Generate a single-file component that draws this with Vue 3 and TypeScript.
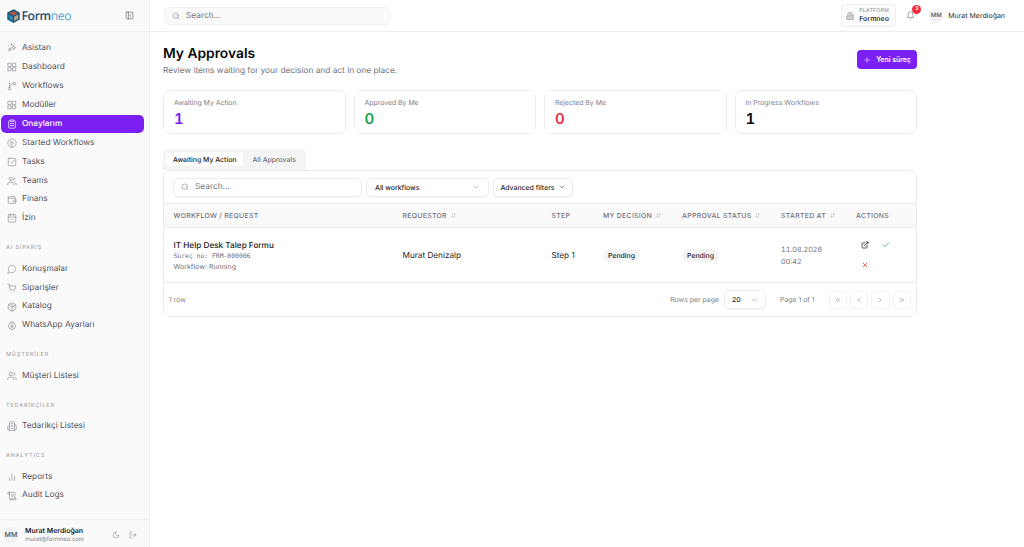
<script setup lang="ts">
type NavItem = { label: string; icon: string; active?: boolean }
type NavGroup = { title?: string; items: NavItem[] }

const groups: NavGroup[] = [
  {
    items: [
      { label: 'Asistan', icon: 'spark' },
      { label: 'Dashboard', icon: 'grid' },
      { label: 'Workflows', icon: 'branch' },
      { label: 'Modüller', icon: 'grid' },
      { label: 'Onaylarım', icon: 'clipboard', active: true },
      { label: 'Started Workflows', icon: 'play' },
      { label: 'Tasks', icon: 'check' },
      { label: 'Teams', icon: 'users' },
      { label: 'Finans', icon: 'wallet' },
      { label: 'İzin', icon: 'calendar' }
    ]
  },
  {
    title: 'AI SIPARIŞ',
    items: [
      { label: 'Konuşmalar', icon: 'chat' },
      { label: 'Siparişler', icon: 'cart' },
      { label: 'Katalog', icon: 'box' },
      { label: 'WhatsApp Ayarları', icon: 'gear' }
    ]
  },
  { title: 'MÜŞTERİLER', items: [{ label: 'Müşteri Listesi', icon: 'users' }] },
  { title: 'TEDARİKÇİLER', items: [{ label: 'Tedarikçi Listesi', icon: 'building' }] },
  {
    title: 'ANALYTICS',
    items: [
      { label: 'Reports', icon: 'bars' },
      { label: 'Audit Logs', icon: 'scroll' }
    ]
  }
]

const icons: Record<string, string[]> = {
  spark: ['M11 2v3', 'M9.500 3.500h3', 'M16 6l1.500 3.500L21 11l-3.500 1.500L16 16l-1.500-3.500L11 11l3.500-1.500z', 'M7 12l1 2.500 2.500 1-2.500 1L7 19l-1-2.500-2.500-1 2.500-1z', 'M3 22h.01', 'M4 6h.01'],
  grid: ['M3 3h7v8H3z', 'M14 3h7v8h-7z', 'M3 14h7v7H3z', 'M14 14h7v7h-7z'],
  branch: ['M6 3v12', 'M6 21a3 3 0 1 0 0-6 3 3 0 0 0 0 6z', 'M18 9a3 3 0 1 0 0-6 3 3 0 0 0 0 6z', 'M15 6a9 9 0 0 0-9 9'],
  clipboard: ['M8 4H6a2 2 0 0 0-2 2v14a2 2 0 0 0 2 2h12a2 2 0 0 0 2-2V6a2 2 0 0 0-2-2h-2', 'M9 2h6v4H9z', 'M8 11h8', 'M8 16h8'],
  play: ['M12 22a10 10 0 1 0 0-20 10 10 0 0 0 0 20z', 'M10 8l6 4-6 4z'],
  check: ['M5 3h14a2 2 0 0 1 2 2v14a2 2 0 0 1-2 2H5a2 2 0 0 1-2-2V5a2 2 0 0 1 2-2z', 'M8 12l3 3 6-7'],
  users: ['M16 21v-2a4 4 0 0 0-4-4H6a4 4 0 0 0-4 4v2', 'M9 11a4 4 0 1 0 0-8 4 4 0 0 0 0 8z', 'M22 21v-2a4 4 0 0 0-3-3.900', 'M16 3.100a4 4 0 0 1 0 7.800'],
  wallet: ['M19 7V5a1 1 0 0 0-1-1H5a2 2 0 0 0 0 4h15a1 1 0 0 1 1 1v10a1 1 0 0 1-1 1H5a2 2 0 0 1-2-2V6', 'M21 12h-4a2 2 0 0 0 0 4h4'],
  calendar: ['M8 2v4', 'M16 2v4', 'M5 4h14a2 2 0 0 1 2 2v14a2 2 0 0 1-2 2H5a2 2 0 0 1-2-2V6a2 2 0 0 1 2-2z', 'M3 10h18', 'M8 16h.01', 'M12 16h.01', 'M16 16h.01'],
  chat: ['M7.900 20A9 9 0 1 0 4 16.100L2 22z'],
  cart: ['M2 3h3l2.700 12.500a1 1 0 0 0 1 .8h9.600a1 1 0 0 0 1-.8L21 7H5.500', 'M9 21h.01', 'M18 21h.01'],
  box: ['M21 8a2 2 0 0 0-1-1.700l-7-4a2 2 0 0 0-2 0l-7 4A2 2 0 0 0 3 8v8a2 2 0 0 0 1 1.700l7 4a2 2 0 0 0 2 0l7-4a2 2 0 0 0 1-1.700z', 'M3.300 7L12 12l8.700-5', 'M12 22V12', 'M7.500 4.300l9 5.100'],
  gear: ['M12 15a3 3 0 1 0 0-6 3 3 0 0 0 0 6z', 'M12 2l2 3 3.500-.5L18 8l3 2-1 2 1 2-3 2-.5 3.500L14 19l-2 3-2-3-3.500.5L6 16l-3-2 1-2-1-2 3-2 .5-3.500L10 5z'],
  building: ['M6 22V4a2 2 0 0 1 2-2h8a2 2 0 0 1 2 2v18z', 'M6 12H4a2 2 0 0 0-2 2v6a2 2 0 0 0 2 2h2', 'M18 9h2a2 2 0 0 1 2 2v9a2 2 0 0 1-2 2h-2', 'M10 6h4', 'M10 10h4', 'M10 14h4', 'M10 18h4'],
  bars: ['M12 20V4', 'M18 20v-9', 'M6 20v-5'],
  scroll: ['M15 12h-5', 'M15 8h-5', 'M19 17V5a2 2 0 0 0-2-2H4', 'M8 21h12a2 2 0 0 0 2-2v-1a1 1 0 0 0-1-1H11a1 1 0 0 0-1 1v1a2 2 0 1 1-4 0V5a2 2 0 1 0-4 0v2a1 1 0 0 0 1 1h3']
}

const stats = [
  { label: 'Awaiting My Action', value: '1', tone: 'violet' },
  { label: 'Approved By Me', value: '0', tone: 'green' },
  { label: 'Rejected By Me', value: '0', tone: 'red' },
  { label: 'In Progress Workflows', value: '1', tone: 'ink' }
]

const columns = [
  { label: 'WORKFLOW / REQUEST', sort: false },
  { label: 'REQUESTOR', sort: true },
  { label: 'STEP', sort: false },
  { label: 'MY DECISION', sort: true },
  { label: 'APPROVAL STATUS', sort: true },
  { label: 'STARTED AT', sort: true },
  { label: 'ACTIONS', sort: false }
]

const pagers = [
  ['M11 17l-5-5 5-5', 'M18 17l-5-5 5-5'],
  ['M15 18l-6-6 6-6'],
  ['M9 18l6-6-6-6'],
  ['M6 17l5-5-5-5', 'M13 17l5-5-5-5']
]
</script>

<template>
  <div class="shell">
    <aside class="sidebar">
      <div class="brand">
        <div class="logo">
          <svg class="cube" viewBox="0 0 24 24">
            <path d="M12 1 22 6.500v11L12 23 2 17.500v-11z" fill="#155a80" />
            <path d="M12 4 19 7.500 12 11 5 7.500z" fill="#b9533b" />
            <path d="M4.500 9.500 11 13v7l-6.500-3.500z" fill="#2f86ad" />
            <path d="M19.500 9.500 13 13v7l6.500-3.500z" fill="#c7a27a" />
          </svg>
          <span class="word"><b>Form</b><i>neo</i></span>
        </div>
        <svg class="collapse" viewBox="0 0 24 24">
          <path d="M5 3h14a2 2 0 0 1 2 2v14a2 2 0 0 1-2 2H5a2 2 0 0 1-2-2V5a2 2 0 0 1 2-2z" />
          <path d="M9 3v18" />
          <path d="M16 15l-3-3 3-3" />
        </svg>
      </div>

      <nav class="nav">
        <section v-for="(group, gi) in groups" :key="gi" class="group">
          <h4 v-if="group.title">{{ group.title }}</h4>
          <a v-for="item in group.items" :key="item.label" class="item" :class="{ active: item.active }">
            <svg class="ico" viewBox="0 0 24 24">
              <path v-for="d in icons[item.icon]" :key="d" :d="d" />
            </svg>
            <span>{{ item.label }}</span>
          </a>
        </section>
      </nav>

      <div class="me">
        <span class="avatar">MM</span>
        <div class="me-text">
          <strong>Murat Merdioğan</strong>
          <small>murat@formneo.com</small>
        </div>
        <svg class="me-ico" viewBox="0 0 24 24"><path d="M12 3a6 6 0 0 0 9 9 9 9 0 1 1-9-9z" /></svg>
        <svg class="me-ico" viewBox="0 0 24 24">
          <path d="M9 21H5a2 2 0 0 1-2-2V5a2 2 0 0 1 2-2h4" />
          <path d="M16 17l5-5-5-5" />
          <path d="M21 12H9" />
        </svg>
      </div>
    </aside>

    <div class="main">
      <header class="topbar">
        <label class="top-search">
          <svg class="ico" viewBox="0 0 24 24"><circle cx="11" cy="11" r="8" /><path d="M21 21l-4.300-4.300" /></svg>
          <span>Search...</span>
        </label>
        <div class="top-right">
          <div class="platform">
            <svg class="ico" viewBox="0 0 24 24">
              <path v-for="d in icons.building" :key="d" :d="d" />
            </svg>
            <div>
              <small>PLATFORM</small>
              <strong>Formneo</strong>
            </div>
          </div>
          <div class="bell">
            <svg viewBox="0 0 24 24">
              <path d="M6 8a6 6 0 0 1 12 0c0 7 3 9 3 9H3s3-2 3-9" />
              <path d="M10.300 21a1.900 1.900 0 0 0 3.400 0" />
            </svg>
            <span class="badge">3</span>
          </div>
          <span class="avatar">MM</span>
          <span class="top-name">Murat Merdioğan</span>
        </div>
      </header>

      <main class="content">
        <div class="heading">
          <div>
            <h1>My Approvals</h1>
            <p>Review items waiting for your decision and act in one place.</p>
          </div>
          <button class="primary" type="button">
            <svg viewBox="0 0 24 24"><path d="M5 12h14" /><path d="M12 5v14" /></svg>
            Yeni süreç
          </button>
        </div>

        <div class="stats">
          <div v-for="s in stats" :key="s.label" class="stat">
            <span>{{ s.label }}</span>
            <strong :class="s.tone">{{ s.value }}</strong>
          </div>
        </div>

        <div class="tabs">
          <span class="tab on">Awaiting My Action</span>
          <span class="tab">All Approvals</span>
        </div>

        <div class="card">
          <div class="toolbar">
            <label class="field search">
              <svg class="ico" viewBox="0 0 24 24"><circle cx="11" cy="11" r="8" /><path d="M21 21l-4.300-4.300" /></svg>
              <span>Search...</span>
            </label>
            <div class="field select">
              <span>All workflows</span>
              <svg class="chev" viewBox="0 0 24 24"><path d="M6 9l6 6 6-6" /></svg>
            </div>
            <div class="field adv">
              <span>Advanced filters</span>
              <svg class="chev dark" viewBox="0 0 24 24"><path d="M6 9l6 6 6-6" /></svg>
            </div>
          </div>

          <div class="row head">
            <div v-for="c in columns" :key="c.label" class="th">
              {{ c.label }}
              <svg v-if="c.sort" class="sort" viewBox="0 0 24 24">
                <path d="M11 16l-3 3-3-3" /><path d="M8 19V5" /><path d="M13 8l3-3 3 3" /><path d="M16 5v14" />
              </svg>
            </div>
          </div>

          <div class="row body">
            <div class="request">
              <strong>IT Help Desk Talep Formu</strong>
              <code>Süreç no: FRM-000006</code>
              <small>Workflow: Running</small>
            </div>
            <div>Murat Denizalp</div>
            <div>Step 1</div>
            <div><span class="pill">Pending</span></div>
            <div><span class="pill">Pending</span></div>
            <div class="date">11.08.2026<br />00:42</div>
            <div class="actions">
              <svg class="act open" viewBox="0 0 24 24">
                <path d="M15 3h6v6" /><path d="M10 14 21 3" />
                <path d="M18 13v6a2 2 0 0 1-2 2H5a2 2 0 0 1-2-2V8a2 2 0 0 1 2-2h6" />
              </svg>
              <svg class="act ok" viewBox="0 0 24 24"><path d="M20 6 9 17l-5-5" /></svg>
              <svg class="act no" viewBox="0 0 24 24"><path d="M18 6 6 18" /><path d="M6 6l12 12" /></svg>
            </div>
          </div>

          <div class="foot">
            <span class="count">1 row</span>
            <div class="pager">
              <span class="muted">Rows per page</span>
              <div class="field rows">
                <span>20</span>
                <svg class="chev" viewBox="0 0 24 24"><path d="M6 9l6 6 6-6" /></svg>
              </div>
              <span class="muted page">Page 1 of 1</span>
              <div class="pages">
                <span v-for="(p, i) in pagers" :key="i" class="pg">
                  <svg viewBox="0 0 24 24"><path v-for="d in p" :key="d" :d="d" /></svg>
                </span>
              </div>
            </div>
          </div>
        </div>
      </main>
    </div>
  </div>
</template>

<style>
html,
body {
  margin: 0;
  background: #fff;
}
</style>

<style scoped>
.shell {
  display: flex;
  height: 547px;
  overflow: hidden;
  font-family: Inter, "Liberation Sans", sans-serif;
  color: #18181b;
  font-size: 8.3px;
  text-rendering: geometricPrecision;
}
svg {
  fill: none;
  stroke: currentColor;
  stroke-width: 1.6;
  stroke-linecap: round;
  stroke-linejoin: round;
  flex: none;
}
.ico {
  width: 10px;
  height: 10px;
}
.sidebar {
  width: 149px;
  flex: none;
  display: flex;
  flex-direction: column;
  background: #fafafa;
  border-right: 1px solid #f0f0f1;
}
.brand {
  height: 31px;
  flex: none;
  display: flex;
  align-items: center;
  justify-content: space-between;
  padding: 0 15px 0 6px;
  border-bottom: 1px solid #eeeeef;
}
.logo {
  display: flex;
  align-items: center;
  gap: 0.5px;
}
.cube {
  width: 15px;
  height: 16px;
  stroke: none;
}
.word {
  font-family: "Open Sans", sans-serif;
  font-size: 12.2px;
  letter-spacing: -0.4px;
}
.word b {
  font-weight: 600;
  color: #1f4f73;
}
.word i {
  font-style: normal;
  color: #5aa3cc;
}
.collapse {
  width: 9px;
  height: 9px;
  color: #55555c;
}
.nav {
  flex: 1;
  padding-top: 7px;
  display: flex;
  flex-direction: column;
}
.group {
  display: flex;
  flex-direction: column;
  margin-bottom: 13.5px;
}
.group h4 {
  margin: 0;
  padding: 4px 6px 7px;
  font-size: 5.5px;
  font-weight: 500;
  letter-spacing: 0.85px;
  color: #a8a8b0;
  line-height: 7px;
}
.item {
  display: flex;
  align-items: center;
  gap: 5.500px;
  height: 18.9px;
  margin: 0 5px 0 1px;
  padding-left: 5.500px;
  border-radius: 5px;
  color: #52525b;
  line-height: 1;
}
.item .ico {
  color: #80808a;
  stroke-width: 1.4;
}
.item.active {
  background: #7b1ff2;
  color: #fff;
  font-weight: 500;
}
.item.active .ico {
  color: #fff;
  stroke-width: 1.7;
}
.me {
  height: 30px;
  flex: none;
  display: flex;
  align-items: center;
  padding: 0 12px 0 3px;
  border-top: 1px solid #eeeeef;
}
.avatar {
  width: 14px;
  height: 14px;
  flex: none;
  border-radius: 50%;
  background: #f1f1f3;
  color: #52525b;
  font-size: 6px;
  font-weight: 500;
  display: flex;
  align-items: center;
  justify-content: center;
}
.me .avatar {
  width: 16px;
  height: 16px;
  font-size: 7px;
}
.me-text {
  flex: 1;
  margin-left: 6px;
  display: flex;
  flex-direction: column;
  gap: 1px;
}
.me-text strong {
  font-size: 7px;
  font-weight: 600;
  line-height: 8px;
}
.me-text small {
  font-size: 5.9px;
  color: #80808a;
  line-height: 7px;
}
.me-ico {
  width: 8px;
  height: 8px;
  margin-left: 9px;
  color: #80808a;
}
.main {
  flex: 1;
  min-width: 0;
}
.topbar {
  height: 31px;
  display: flex;
  align-items: center;
  justify-content: space-between;
  padding: 0 19px 0 14px;
  border-bottom: 1px solid #eeeeef;
}
.top-search {
  width: 226px;
  height: 18px;
  box-sizing: border-box;
  display: flex;
  align-items: center;
  gap: 6px;
  padding-left: 7px;
  background: #fafafa;
  border: 1px solid #f0f0f1;
  border-radius: 5px;
  color: #71717a;
}
.top-search .ico {
  width: 8px;
  height: 8px;
}
.top-right {
  display: flex;
  align-items: center;
}
.platform {
  width: 55px;
  height: 23px;
  box-sizing: border-box;
  display: flex;
  align-items: center;
  gap: 5px;
  padding-left: 4px;
  border: 1px solid #efeff1;
  border-radius: 4px;
  background: #fbfbfb;
}
.platform .ico {
  width: 8px;
  height: 8px;
  color: #71717a;
}
.platform small {
  display: block;
  font-size: 5px;
  letter-spacing: 0.4px;
  color: #80808a;
  line-height: 6px;
}
.platform strong {
  display: block;
  font-size: 7px;
  font-weight: 500;
  line-height: 9px;
}
.bell {
  position: relative;
  margin-left: 10px;
  width: 9px;
  height: 9px;
  color: #71717a;
}
.bell svg {
  width: 9px;
  height: 9px;
  display: block;
}
.badge {
  position: absolute;
  top: -6px;
  left: 6px;
  width: 9px;
  height: 9px;
  border-radius: 50%;
  background: #ef2b3a;
  color: #fff;
  font-size: 5px;
  font-weight: 700;
  text-align: center;
  line-height: 9px;
}
.top-right .avatar {
  margin-left: 14px;
}
.top-name {
  margin-left: 5px;
  font-size: 7px;
  font-weight: 400;
  color: #27272a;
}
.content {
  width: 754px;
  margin-left: 13px;
}
.heading {
  display: flex;
  justify-content: space-between;
  align-items: flex-start;
  padding-top: 12.5px;
  height: 58px;
  box-sizing: border-box;
}
.heading h1 {
  margin: 0;
  font-size: 13.8px;
  font-weight: 600;
  line-height: 18px;
  color: #09090b;
}
.heading p {
  margin: 3px 0 0;
  color: #71717a;
  line-height: 11px;
}
.primary {
  margin-top: 5.5px;
  width: 60px;
  height: 19px;
  padding: 0;
  border: 0;
  border-radius: 4px;
  background: #7b1ff2;
  color: #fff;
  font: 600 6.9px Inter, sans-serif;
  display: flex;
  align-items: center;
  justify-content: center;
  gap: 5px;
}
.primary svg {
  width: 8px;
  height: 8px;
}
.stats {
  display: grid;
  grid-template-columns: repeat(4, 1fr);
  gap: 8px;
}
.stat {
  height: 44px;
  box-sizing: border-box;
  padding: 7px 10px;
  border: 1px solid #ededf0;
  border-radius: 7px;
  display: flex;
  flex-direction: column;
  gap: 1.5px;
}
.stat span {
  font-size: 6.9px;
  color: #80808a;
  line-height: 10px;
}
.stat strong {
  font-size: 15px;
  font-weight: 600;
  line-height: 17px;
  font-variant-numeric: tabular-nums;
}
.violet {
  color: #7b1ff2;
}
.green {
  color: #16a34a;
}
.red {
  color: #e5303f;
}
.ink {
  color: #09090b;
}
.tabs {
  display: inline-flex;
  margin-top: 15px;
  padding: 3px 3px 4px;
  gap: 2px;
  height: 21px;
  box-sizing: border-box;
  border-radius: 5px 5px 0 0;
  background: #f4f4f5;
  vertical-align: top;
}
.tab {
  display: flex;
  align-items: center;
  padding: 0 7px;
  font-size: 6.9px;
  font-weight: 450;
  color: #71717a;
  border-radius: 4px;
}
.tab.on {
  background: #fff;
  color: #18181b;
}
.card {
  height: 147px;
  box-sizing: border-box;
  border: 1px solid #ededf0;
  border-radius: 7px;
}
.toolbar {
  height: 32px;
  display: flex;
  align-items: center;
  gap: 4px;
  padding: 0 9px;
}
.field {
  height: 19px;
  box-sizing: border-box;
  display: flex;
  align-items: center;
  border: 1px solid #ececef;
  border-radius: 5px;
  background: #fff;
  box-shadow: 0 1px 1px rgba(0, 0, 0, 0.03);
  font-size: 6.9px;
  font-weight: 450;
  color: #27272a;
}
.search {
  width: 189px;
  gap: 6px;
  padding-left: 7px;
  font-size: 8.3px;
  font-weight: 400;
  color: #71717a;
}
.search .ico {
  width: 8px;
  height: 8px;
}
.select {
  width: 123px;
  justify-content: space-between;
  padding: 0 8px;
}
.adv {
  width: 80px;
  justify-content: center;
  gap: 3px;
}
.chev {
  width: 8px;
  height: 8px;
  color: #8a8a92;
}
.chev.dark {
  color: #27272a;
}
.row {
  display: grid;
  grid-template-columns: 228.5px 149px 51.5px 79px 99px 75px 1fr;
  align-items: center;
  border-top: 1px solid #ededf0;
}
.row > div {
  padding-left: 10px;
}
.row > div:first-child {
  padding-left: 9.500px;
}
.head {
  height: 24px;
  box-sizing: border-box;
  background: #fafafa;
}
.th {
  display: flex;
  align-items: center;
  gap: 3px;
  font-size: 6.9px;
  font-weight: 500;
  letter-spacing: 0.3px;
  color: #71717a;
}
.sort {
  width: 7px;
  height: 7px;
  color: #b8b8bf;
}
.body {
  height: 55px;
  box-sizing: border-box;
  font-size: 8.2px;
  color: #27272a;
}
.request {
  display: flex;
  flex-direction: column;
}
.request strong {
  font-size: 8.2px;
  font-weight: 500;
  line-height: 12px;
  color: #18181b;
}
.request code {
  margin-top: 1px;
  font: 6.400px "DejaVu Sans Mono", monospace;
  line-height: 9px;
  color: #71717a;
}
.request small {
  font-size: 7px;
  line-height: 11px;
  color: #71717a;
}
.pill {
  display: inline-block;
  padding: 0 5px;
  border-radius: 7px;
  background: #f4f4f5;
  font-size: 6.9px;
  font-weight: 450;
  line-height: 13px;
  color: #27272a;
}
.row > .date {
  padding-top: 1px;
  font-size: 7.2px;
  line-height: 12px;
  color: #71717a;
  font-variant-numeric: tabular-nums;
}
.row > .actions {
  padding-left: 15px;
  display: grid;
  grid-template-columns: 21px 21px;
  row-gap: 12.7px;
  align-items: center;
}
.act {
  width: 8px;
  height: 8px;
  stroke-width: 2.2;
}
.open {
  color: #18181b;
}
.ok {
  color: #22a35a;
}
.no {
  color: #e5303f;
}
.foot {
  height: 34px;
  box-sizing: border-box;
  display: flex;
  align-items: center;
  justify-content: space-between;
  padding: 0 5px;
  border-top: 1px solid #ededf0;
}
.count,
.muted {
  font-size: 6.9px;
  color: #80808a;
}
.pager {
  display: flex;
  align-items: center;
}
.rows {
  width: 42px;
  height: 19px;
  margin-left: 5px;
  padding: 0 7px;
  justify-content: space-between;
}
.page {
  margin-left: 14px;
}
.pages {
  display: flex;
  gap: 2.800px;
  margin-left: 14px;
}
.pg {
  width: 18.500px;
  height: 18px;
  box-sizing: border-box;
  display: flex;
  align-items: center;
  justify-content: center;
  border: 1px solid #f1f1f3;
  border-radius: 5px;
  color: #8a8a92;
}
.pg svg {
  width: 8px;
  height: 8px;
}
</style>
